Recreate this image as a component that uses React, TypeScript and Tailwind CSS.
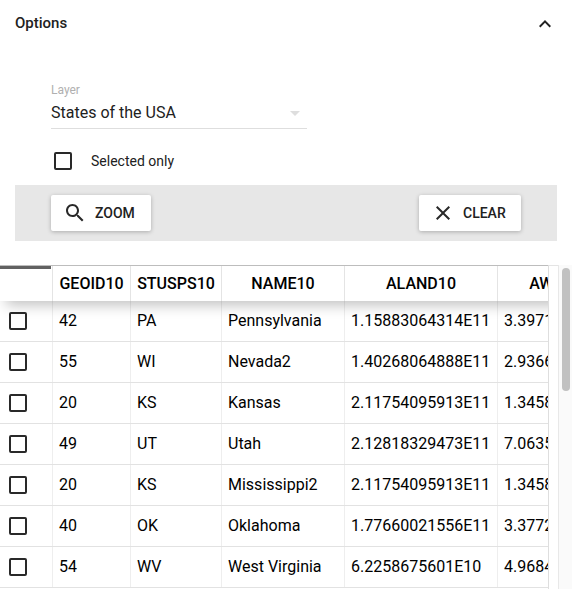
import React from "react";

const columns = [
  { name: "GEOID10", width: "w-[78px]" },
  { name: "STUSPS10", width: "w-[91px]" },
  { name: "NAME10", width: "w-[123px]" },
  { name: "ALAND10", width: "w-[153px]" },
  { name: "AWATER10", width: "w-[144px]" },
];

const rows = [
  ["42", "PA", "Pennsylvania", "1.15883064314E11", "3.39712"],
  ["55", "WI", "Nevada2", "1.40268064888E11", "2.93661"],
  ["20", "KS", "Kansas", "2.11754095913E11", "1.34585"],
  ["49", "UT", "Utah", "2.12818329473E11", "7.06352"],
  ["20", "KS", "Mississippi2", "2.11754095913E11", "1.34585"],
  ["40", "OK", "Oklahoma", "1.77660021556E11", "3.37722"],
  ["54", "WV", "West Virginia", "6.2258675601E10", "4.96845"],
];

function Checkbox() {
  return <span className="block size-[18px] shrink-0 rounded-[2px] border-2 border-[#292929] bg-white" />;
}

function ActionButton({ label, width, children }: { label: string; width: string; children: React.ReactNode }) {
  return (
    <button
      className={`${width} flex h-9 items-center rounded-[2px] bg-white pl-3 text-sm font-medium text-[#212121] shadow-[0_1px_4px_rgba(0,0,0,0.26)]`}
    >
      <svg viewBox="0 0 24 24" className="mr-2 size-6 fill-[#292929]">
        {children}
      </svg>
      {label}
    </button>
  );
}

export default function App() {
  return (
    <div className="flex h-[589px] w-[572px] flex-col overflow-hidden bg-white font-['Roboto','Liberation_Sans',sans-serif] text-[#212121]">
      <header className="flex h-[46px] shrink-0 items-center justify-between pr-[15px] pl-[15px]">
        <h1 className="text-[15px] leading-5 font-medium">Options</h1>
        <svg viewBox="0 0 24 24" className="mt-[2px] size-6 fill-[#212121]">
          <path d="M12 8l-6 6 1.41 1.41L12 10.83l4.59 4.58L18 14z" />
        </svg>
      </header>

      <section className="flex h-[139px] shrink-0 flex-col pt-[36px] pl-[51px]">
        <span className="text-xs leading-4 text-[#b0b0b0]">Layer</span>
        <div className="flex h-[31px] w-[256px] items-center justify-between border-b border-[#dedede] pr-[7px]">
          <span className="text-base leading-[30px]">States of the USA</span>
          <svg viewBox="0 0 10 5" className="mt-px h-[5px] w-[10px] fill-[#dedede]">
            <path d="M0 0h10L5 5z" />
          </svg>
        </div>
        <label className="mt-[23px] ml-[3px] flex h-[18px] items-center text-sm">
          <Checkbox />
          <span className="ml-[19px]">Selected only</span>
        </label>
      </section>

      <div className="mx-[15px] flex h-14 shrink-0 items-center justify-between bg-[#e7e7e7] pr-9 pl-9">
        <ActionButton label="ZOOM" width="w-[100px]">
          <path d="M15.5 14h-.79l-.28-.27C15.41 12.59 16 11.11 16 9.5 16 5.91 13.09 3 9.5 3S3 5.91 3 9.5 5.91 16 9.5 16c1.61 0 3.09-.59 4.23-1.57l.27.28v.79l5 4.99L20.49 19l-4.99-5zm-6 0C7.01 14 5 11.99 5 9.5S7.01 5 9.5 5 14 7.01 14 9.5 11.99 14 9.5 14z" />
        </ActionButton>
        <ActionButton label="CLEAR" width="w-[102px]">
          <path d="M19 6.41L17.59 5 12 10.59 6.41 5 5 6.41 10.59 12 5 17.59 6.41 19 12 13.41 17.59 19 19 17.59 13.41 12 19 6.41z" />
        </ActionButton>
      </div>

      <div className="mt-6 flex h-[324px] shrink-0">
        <div className="w-[549px] overflow-hidden border-r border-[#dedede] text-base text-black">
          <div className="relative flex h-[36px] w-[640px] border-t border-[#bdbdbd] bg-white shadow-[0_10px_14px_-6px_rgba(0,0,0,0.25)]">
            <div className="w-[53px] shrink-0 border-r border-[#e4e4e4]">
              <div className="h-[3px] w-[51px] bg-[#616161]" />
            </div>
            {columns.map((column) => (
              <div
                key={column.name}
                className={`${column.width} flex shrink-0 items-center justify-center border-r border-[#e4e4e4] font-medium`}
              >
                {column.name}
              </div>
            ))}
          </div>
          {rows.map((row, index) => (
            <div key={index} className="flex h-[41px] w-[640px] border-b border-[#e2e2e2]">
              <div className="flex w-[53px] shrink-0 items-center border-r border-[#eeeeee] pl-[9px]">
                <Checkbox />
              </div>
              {row.map((value, cell) => (
                <div
                  key={cell}
                  className={`${columns[cell].width} flex shrink-0 items-center border-r border-[#eeeeee] pl-[6px]`}
                >
                  {value}
                </div>
              ))}
            </div>
          ))}
        </div>
        <div className="w-[9px] border-t border-[#e4e4e4]" />
        <div className="w-[14px] border-l border-[#e8e8e8] bg-[#fafafa] pt-[3px] pl-[3px]">
          <div className="h-[123px] w-2 rounded-full bg-[#c1c1c1]" />
        </div>
      </div>
    </div>
  );
}
